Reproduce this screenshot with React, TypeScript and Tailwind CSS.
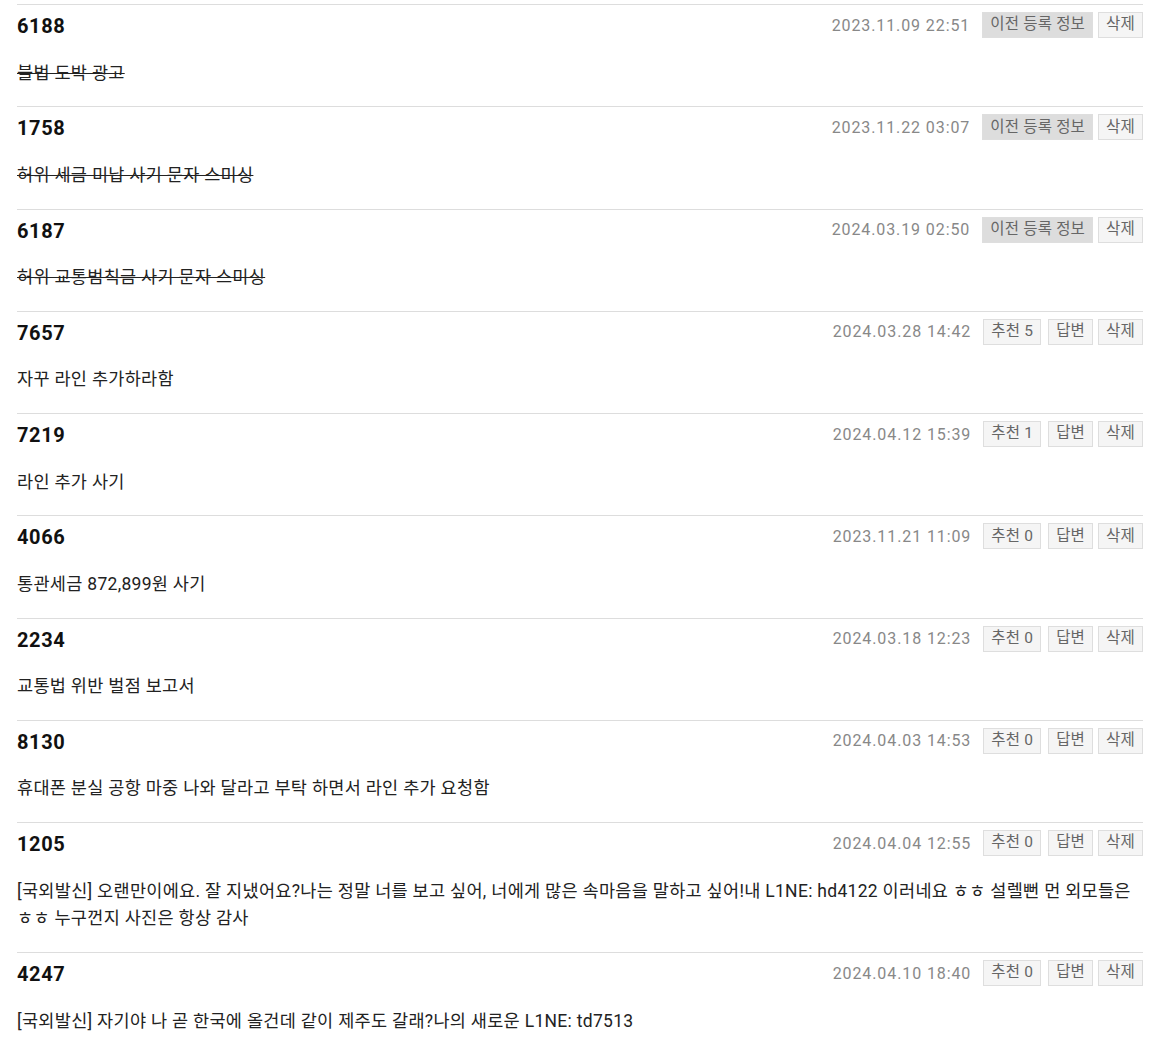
import React from 'react';

type Item = {
  id: string;
  date: string;
  text: string;
  old?: boolean;
  likes?: number;
};

const ITEMS: Item[] = [
  { id: '6188', date: '2023.11.09 22:51', text: '불법 도박 광고', old: true },
  { id: '1758', date: '2023.11.22 03:07', text: '허위 세금 미납 사기 문자 스미싱', old: true },
  { id: '6187', date: '2024.03.19 02:50', text: '허위 교통범칙금 사기 문자 스미싱', old: true },
  { id: '7657', date: '2024.03.28 14:42', text: '자꾸 라인 추가하라함', likes: 5 },
  { id: '7219', date: '2024.04.12 15:39', text: '라인 추가 사기', likes: 1 },
  { id: '4066', date: '2023.11.21 11:09', text: '통관세금 872,899원 사기', likes: 0 },
  { id: '2234', date: '2024.03.18 12:23', text: '교통법 위반 벌점 보고서', likes: 0 },
  { id: '8130', date: '2024.04.03 14:53', text: '휴대폰 분실 공항 마중 나와 달라고 부탁 하면서 라인 추가 요청함', likes: 0 },
  {
    id: '1205',
    date: '2024.04.04 12:55',
    text: '[국외발신] 오랜만이에요. 잘 지냈어요?나는 정말 너를 보고 싶어, 너에게 많은 속마음을 말하고 싶어!내 L1NE: hd4122 이러네요 ㅎㅎ 설렐뻔 먼 외모들은 ㅎㅎ 누구껀지 사진은 항상 감사',
    likes: 0,
  },
  { id: '4247', date: '2024.04.10 18:40', text: '[국외발신] 자기야 나 곧 한국에 올건데 같이 제주도 갈래?나의 새로운 L1NE: td7513', likes: 0 },
];

const btn = 'h-[26px] px-[7px] flex items-center text-[15.5px] tracking-[0.2px] text-[#666] border border-[#dedede]';

function Row({ item }: { item: Item }) {
  return (
    <div className="border-t border-[#dddddd] pt-[7px] pb-[19px]">
      {/* 헤더 */}
      <div className="flex items-center justify-between h-[26px]">
        <span className="text-[20px] font-bold tracking-[0.6px] text-[#111] leading-[26px] pt-[2px]">{item.id}</span>
        <div className="flex items-center">
          <span className="text-[16px] tracking-[0.9px] text-[#888] mr-[12px] pt-[1px]">{item.date}</span>
          {item.old ? (
            <span className={`${btn} bg-[#dddddd] border-[#dddddd] mr-[5px]`}>이전 등록 정보</span>
          ) : (
            <>
              <span className={`${btn} bg-[#f5f5f5] mr-[7px]`}>추천 {item.likes}</span>
              <span className={`${btn} bg-[#f5f5f5] mr-[5px]`}>답변</span>
            </>
          )}
          <span className={`${btn} bg-[#f5f5f5]`}>삭제</span>
        </div>
      </div>

      {/* 내용 */}
      <p
        className={`mt-[21.5px] text-[17.5px] tracking-[0.3px] leading-[27.75px] text-[#222] ${
          item.old ? 'line-through' : ''
        }`}
      >
        {item.text}
      </p>
    </div>
  );
}

export default function App() {
  return (
    <div
      className="bg-white min-h-screen pt-[4px] pl-[17px] pr-[17px]"
      style={{ fontFamily: 'Roboto, "Noto Sans CJK KR", sans-serif' }}
    >
      {ITEMS.map((item) => (
        <Row key={item.id} item={item} />
      ))}
    </div>
  );
}
